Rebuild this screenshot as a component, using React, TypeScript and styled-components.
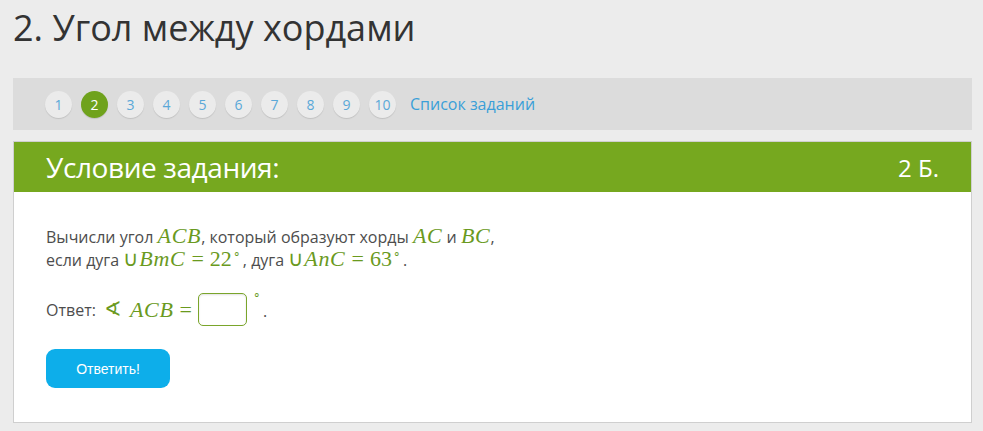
import React from "react";
import styled, { createGlobalStyle } from "styled-components";

const Global = createGlobalStyle`
  html, body { margin: 0; padding: 0; background: #ececec; }
  body { font-family: "Open Sans", "Liberation Sans", sans-serif; }
`;

const Page = styled.div`
  padding: 0 11px 0 13px;
`;

const Title = styled.h1`
  margin: 3px 0 0;
  font-size: 36px;
  line-height: 49px;
  font-weight: 400;
  color: #333;
`;

const Nav = styled.nav`
  margin-top: 26px;
  height: 52px;
  background: #dcdcdc;
  display: flex;
  align-items: center;
  padding-left: 32px;
  gap: 9px;
`;

const Circle = styled.a<{ $active?: boolean }>`
  width: 27px;
  height: 27px;
  border-radius: 50%;
  display: flex;
  align-items: center;
  justify-content: center;
  font-size: 14px;
  text-decoration: none;
  background: ${(p) => (p.$active ? "#6fa21c" : "#ebebeb")};
  color: ${(p) => (p.$active ? "#fff" : "#5aa8d8")};
  box-shadow: 0 1px 1px rgba(0, 0, 0, 0.12);
`;

const ListLink = styled.a`
  margin-left: 5px;
  font-size: 16px;
  color: #3a9fd8;
  text-decoration: none;
`;

const Card = styled.section`
  margin-top: 11px;
  border: 1px solid #cfcfcf;
  background: #fff;
`;

const Header = styled.div`
  height: 50px;
  background: #76a81f;
  color: #fff;
  display: flex;
  align-items: center;
  justify-content: space-between;
  padding: 0 32px 0 32px;
  font-size: 28px;
  letter-spacing: -0.4px;
`;

const Points = styled.span`
  font-size: 24px;
  letter-spacing: 0;
`;

const Body = styled.div`
  padding: 33px 32px 34px;
  color: #4d4d4d;
  font-size: 16px;
`;

const Para = styled.p`
  margin: 0;
  line-height: 22px;
`;

const M = styled.span`
  font-family: "Liberation Serif", "Times New Roman", serif;
  font-style: italic;
  font-size: 22px;
  line-height: 1;
  letter-spacing: 0.7px;
  color: #6a9a1e;
`;

const MU = styled.span`
  font-family: "Liberation Serif", "Times New Roman", serif;
  font-size: 22px;
  line-height: 1;
  color: #6a9a1e;
`;

const Sym = styled.span`
  font-family: "DejaVu Sans", sans-serif;
  font-weight: 200;
  font-size: 21px;
  line-height: 1;
  color: #6a9a1e;
  margin-right: 1px;
`;

const Eq = styled(MU)`
  margin: 0 6px;
`;

const Deg = styled.sup`
  font-family: "Liberation Serif", serif;
  font-size: 12px;
  color: #6a9a1e;
  vertical-align: 8px;
  line-height: 0;
  margin: 0 2px 0 1px;
`;

const AnswerRow = styled.div`
  margin-top: 21px;
  display: flex;
  align-items: center;
  height: 35px;
`;

const Label = styled.span`
  margin-right: 8px;
`;

const AngleSym = styled(Sym)`
  margin-right: 8px;
`;

const Input = styled.input`
  width: 49px;
  height: 33px;
  box-sizing: border-box;
  border: 1px solid #7aa52b;
  border-radius: 5px;
  box-shadow: inset 0 1px 2px rgba(0, 0, 0, 0.12);
  outline: none;
`;

const Tail = styled.span`
  display: inline-flex;
  align-items: flex-start;
  align-self: stretch;
  padding: 3px 0 0 5px;
  gap: 0;
`;

const Dot = styled.span`
  padding-top: 5px;
`;

const Button = styled.button`
  margin-top: 22px;
  width: 124px;
  height: 39px;
  border: none;
  border-radius: 9px;
  background: #0daeea;
  color: #fff;
  font-family: "Liberation Sans", Arial, sans-serif;
  font-size: 14px;
  cursor: pointer;
`;

export default function App() {
  const nums = [1, 2, 3, 4, 5, 6, 7, 8, 9, 10];
  return (
    <Page>
      <Global />
      <Title>2. Угол между хордами</Title>
      <Nav>
        {nums.map((n) => (
          <Circle key={n} $active={n === 2}>
            {n}
          </Circle>
        ))}
        <ListLink>Список заданий</ListLink>
      </Nav>
      <Card>
        <Header>
          <span>Условие задания:</span>
          <Points>2 Б.</Points>
        </Header>
        <Body>
          <Para>
            Вычисли угол <M>ACB</M>, который образуют хорды <M>AC</M> и <M>BC</M>,
          </Para>
          <Para>
            если дуга <Sym>∪</Sym>
            <M>BmC</M>
            <Eq>=</Eq>
            <MU>22</MU>
            <Deg>∘</Deg>, дуга <Sym>∪</Sym>
            <M>AnC</M>
            <Eq>=</Eq>
            <MU>63</MU>
            <Deg>∘</Deg>.
          </Para>
          <AnswerRow>
            <Label>Ответ:</Label>
            <AngleSym>∢</AngleSym>
            <M>ACB</M>
            <Eq>=</Eq>
            <Input />
            <Tail>
              <Deg>∘</Deg>
              <Dot>.</Dot>
            </Tail>
          </AnswerRow>
          <Button>Ответить!</Button>
        </Body>
      </Card>
    </Page>
  );
}
